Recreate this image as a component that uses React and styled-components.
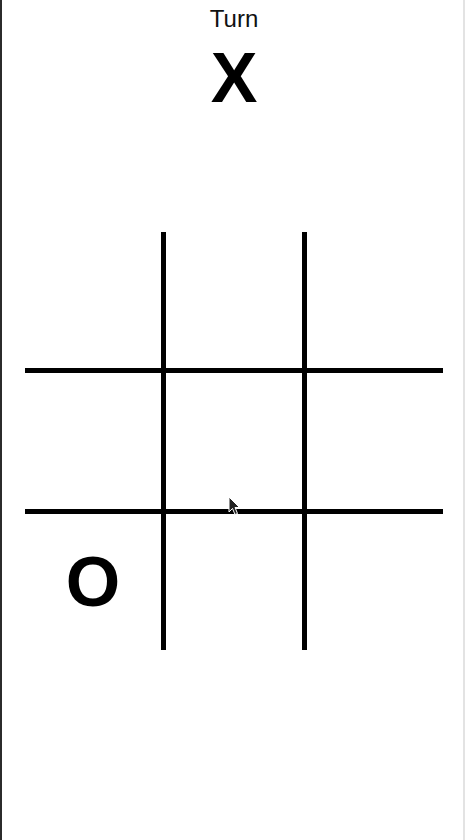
import React, { useState } from 'react';
import styled, { createGlobalStyle } from 'styled-components';

const GlobalStyle = createGlobalStyle`
  html, body {
    margin: 0;
    padding: 0;
    background: #fff;
  }
  body {
    font-family: 'Liberation Sans', Arial, sans-serif;
    color: #000;
  }
`;

const ScFrame = styled.div`
  position: relative;
  box-sizing: border-box;
  width: 465px;
  height: 840px;
  border-left: 2px solid #2b2b2b;
  border-right: 2px solid #e3e3e3;
  padding-left: 3px;
  display: flex;
  flex-direction: column;
  align-items: center;
  overflow: hidden;
`;

const ScTurnLabel = styled.div`
  margin-top: 5px;
  font-size: 24px;
  line-height: 28px;
  font-weight: 400;
  color: #111;
`;

const ScTurnMark = styled.div`
  margin-top: 10px;
  font-size: 70px;
  line-height: 70px;
  font-weight: 700;
`;

const ScBoard = styled.div`
  margin-top: 119px;
  display: grid;
  grid-template-columns: repeat(3, 136px);
  grid-template-rows: repeat(3, 136px);
  gap: 5px;
  background: #000;
`;

const ScCell = styled.button`
  all: unset;
  background: #fff;
  display: flex;
  align-items: center;
  justify-content: center;
  font-family: 'Liberation Sans', Arial, sans-serif;
  font-size: 70px;
  font-weight: 700;
  line-height: 1;
  cursor: pointer;
`;

const ScCursor = styled.svg`
  position: absolute;
  left: 226px;
  top: 496px;
  width: 13px;
  height: 20px;
  pointer-events: none;
`;

const App = () => {
  const [cells, setCells] = useState(['', '', '', '', '', '', 'O', '', '']);
  const [turn, setTurn] = useState('X');

  const onCellClick = (index) => {
    if (cells[index]) return;
    const next = [...cells];
    next[index] = turn;
    setCells(next);
    setTurn(turn === 'X' ? 'O' : 'X');
  };

  return (
    <>
      <GlobalStyle />
      <ScFrame>
        <ScTurnLabel>Turn</ScTurnLabel>
        <ScTurnMark>{turn}</ScTurnMark>

        <ScBoard>
          {cells.map((value, i) => (
            <ScCell key={i} onClick={() => onCellClick(i)}>
              {value}
            </ScCell>
          ))}
        </ScBoard>

        <ScCursor viewBox="0 0 13 20">
          <path d="M1 1 L1 16 L4.5 12.5 L7 18.5 L9.5 17.5 L7 11.5 L11.5 11.5 Z" fill="#222" stroke="#fff" strokeWidth="1" strokeLinejoin="round" />
        </ScCursor>
      </ScFrame>
    </>
  );
};

export default App;
